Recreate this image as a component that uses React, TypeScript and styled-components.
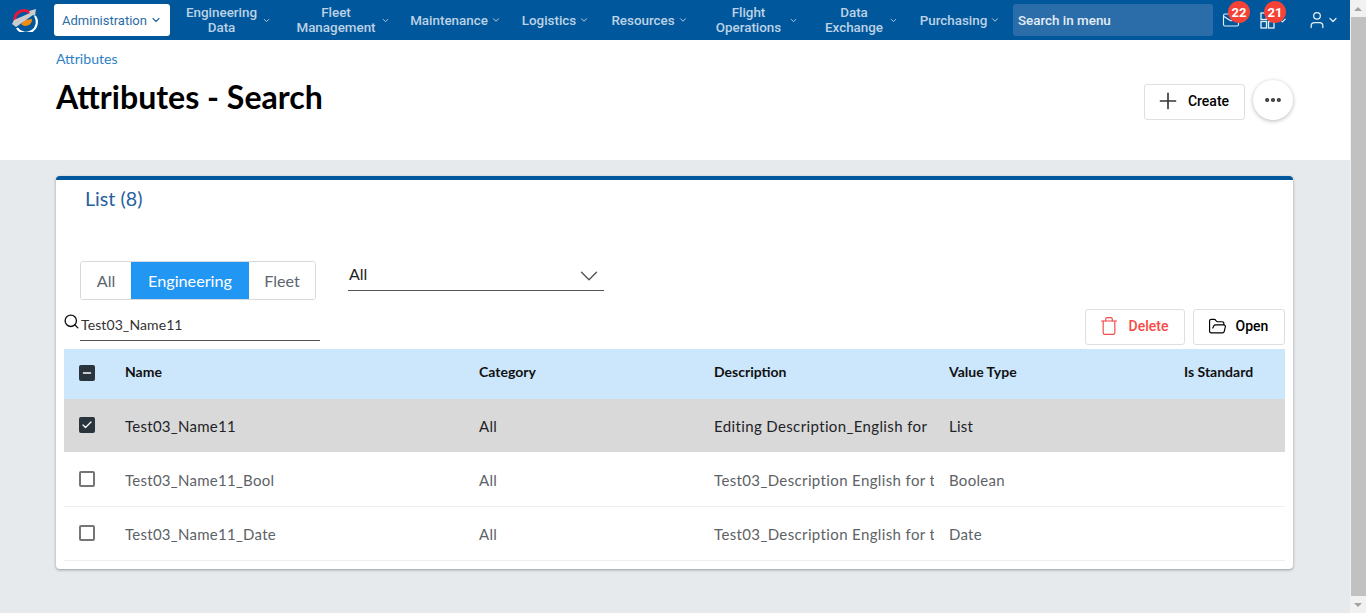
import React from 'react'
import styled, { createGlobalStyle } from 'styled-components'
import { ChevronDown, Plus, Trash, FolderOpen, Mail, User, Check, Minus, Search, MoreHorizontal } from 'lucide-react'

const GlobalStyle = createGlobalStyle`
  html, body { margin: 0; padding: 0; height: 100%; overflow: hidden; }
  body { font-family: Lato, "Liberation Sans", sans-serif; background: #e6eaed; }
  * { box-sizing: border-box; }
`

const S = {
  Shell: styled.div`
    display: flex;
    width: 1366px;
    height: 613px;
    overflow: hidden;
  `,
  Main: styled.div`
    width: 1350px;
    flex: none;
    display: flex;
    flex-direction: column;
  `,
  Scrollbar: styled.div`
    width: 16px;
    flex: none;
    background: #f1f1f1;
    display: flex;
    flex-direction: column;
    align-items: center;
    justify-content: space-between;
  `,
  ScrollArrow: styled.div<{ down?: boolean }>`
    height: 17px;
    width: 16px;
    flex: none;
    display: flex;
    align-items: center;
    justify-content: center;
    &::before {
      content: '';
      border-left: 4px solid transparent;
      border-right: 4px solid transparent;
      ${({ down }) => (down ? 'border-top: 4px solid #a3a3a3;' : 'border-bottom: 4px solid #a3a3a3;')}
    }
  `,
  ScrollThumb: styled.div`
    flex: 1;
    width: 15px;
    margin-left: 1px;
    background: #c1c1c1;
  `,
  Nav: styled.nav`
    height: 40px;
    flex: none;
    background: #01579b;
    display: flex;
    align-items: center;
    font-family: Roboto, "Liberation Sans", sans-serif;
    font-size: 13.4px;
    font-weight: 500;
    color: #bcd2e6;
  `,
  LogoSlot: styled.div`
    width: 54px;
    height: 40px;
    flex: none;
    display: flex;
    align-items: center;
    padding-left: 11px;
  `,
  ActiveItem: styled.div`
    width: 116px;
    height: 32px;
    flex: none;
    background: #fff;
    color: #2a6ca6;
    font-weight: 400;
    font-size: 13px;
    border-radius: 3px;
    display: flex;
    align-items: center;
    justify-content: center;
    gap: 3px;
  `,
  Item: styled.div<{ w: number; gap?: number }>`
    width: ${({ w }) => w}px;
    flex: none;
    display: flex;
    align-items: center;
    justify-content: center;
    gap: ${({ gap }) => gap ?? 3}px;
    text-align: center;
    line-height: 15px;
  `,
  MenuSearch: styled.div`
    width: 200px;
    height: 32px;
    flex: none;
    margin-left: 2px;
    background: #2b6da9;
    border-radius: 3px;
    color: #e3edf6;
    display: flex;
    align-items: center;
    padding-left: 5px;
  `,
  IconSlot: styled.div<{ w: number }>`
    position: relative;
    width: ${({ w }) => w}px;
    height: 40px;
    flex: none;
    display: flex;
    align-items: center;
    color: #e8f0f7;
  `,
  MailIcon: styled.span`
    margin-left: 9px;
    display: flex;
  `,
  AppsSlot: styled.span`
    margin-left: 5px;
    display: flex;
    align-items: center;
    gap: 2px;
  `,
  UserIcon: styled.span`
    margin-left: 2px;
    display: flex;
    align-items: center;
  `,
  Badge: styled.span<{ left: number }>`
    position: absolute;
    top: 1px;
    left: ${({ left }) => left}px;
    width: 22px;
    height: 22px;
    border-radius: 50%;
    background: #f44336;
    color: #fff;
    font-size: 13px;
    font-weight: 700;
    display: flex;
    align-items: center;
    justify-content: center;
  `,
  Header: styled.header`
    height: 120px;
    flex: none;
    background: #fff;
    padding: 10px 57px 0 56px;
    display: flex;
    justify-content: space-between;
  `,
  Crumb: styled.div`
    font-size: 14.1px;
    line-height: 17px;
    color: #2d7fc7;
  `,
  Title: styled.h1`
    margin: 10px 0 0;
    font-size: 32.1px;
    line-height: 40px;
    font-weight: 700;
    color: #000;
  `,
  HeaderActions: styled.div`
    display: flex;
    gap: 8px;
    padding-top: 34px;
    align-items: flex-start;
  `,
  Button: styled.button<{ danger?: boolean; w: number; gap: number; pr?: number }>`
    width: ${({ w }) => w}px;
    height: 36px;
    padding: 0 ${({ pr }) => pr ?? 0}px 2px 0;
    background: #fff;
    border: 1px solid #dfdfdf;
    border-radius: 3px;
    color: ${({ danger }) => (danger ? '#f44a4a' : '#000')};
    font-family: Roboto, "Liberation Sans", sans-serif;
    font-size: 14px;
    font-weight: 500;
    display: flex;
    align-items: center;
    justify-content: center;
    gap: ${({ gap }) => gap}px;
  `,
  RoundButton: styled.button`
    width: 40px;
    height: 40px;
    margin-top: -4px;
    padding: 0;
    border: 0;
    border-radius: 50%;
    background: #fff;
    color: #333;
    box-shadow: 0 1px 4px rgba(0, 0, 0, 0.28);
    display: flex;
    align-items: center;
    justify-content: center;
  `,
  Content: styled.main`
    padding: 16px 57px 0 56px;
  `,
  Card: styled.section`
    height: 393px;
    background: #fff;
    border-top: 4px solid #01579b;
    border-radius: 4px;
    box-shadow: 0 1px 3px rgba(0, 0, 0, 0.35);
    padding: 0 8px;
  `,
  CardTitle: styled.h2`
    margin: 0;
    padding: 7px 0 0 21px;
    height: 81px;
    font-size: 19.7px;
    line-height: 24px;
    font-weight: 400;
    color: #27609e;
  `,
  FilterRow: styled.div`
    display: flex;
    align-items: flex-start;
    padding-left: 16px;
    height: 48px;
  `,
  Segments: styled.div`
    display: flex;
    height: 39px;
    border: 1px solid #d6dadf;
    border-radius: 3px;
    overflow: hidden;
  `,
  Segment: styled.div<{ active?: boolean; w: number }>`
    width: ${({ w }) => w}px;
    background: ${({ active }) => (active ? '#2196f3' : '#fff')};
    color: ${({ active }) => (active ? '#fff' : '#5c6670')};
    font-size: 16.2px;
    display: flex;
    align-items: center;
    justify-content: center;
  `,
  Select: styled.div`
    width: 256px;
    height: 30px;
    margin-left: 32px;
    border-bottom: 1px solid #555;
    font-size: 16px;
    color: #222;
    display: flex;
    align-items: flex-start;
    justify-content: space-between;
    padding: 3px 0 0 1px;
    line-height: 20px;
  `,
  SelectArrow: styled.span`
    display: flex;
    margin-top: -3px;
    color: #555;
  `,
  ToolRow: styled.div`
    height: 40px;
    display: flex;
    justify-content: space-between;
    align-items: flex-start;
  `,
  SearchField: styled.div`
    position: relative;
    width: 240px;
    height: 32px;
    margin-left: 16px;
    padding-left: 1px;
    border-bottom: 1px solid #555;
    font-size: 14px;
    color: #333;
    line-height: 32px;
    letter-spacing: 0.1px;
  `,
  SearchIcon: styled.span`
    position: absolute;
    left: -17px;
    top: 4px;
    color: #111;
    display: flex;
  `,
  Tools: styled.div`
    display: flex;
    gap: 8px;
  `,
  TableHead: styled.div`
    display: grid;
    grid-template-columns: 61px 354px 235px 235px 235px 101px;
    height: 50px;
    align-items: center;
    background: #cce6fc;
    color: #111;
    font-size: 14px;
    font-weight: 700;
    padding-bottom: 5px;
  `,
  Row: styled.div<{ selected?: boolean }>`
    display: grid;
    grid-template-columns: 61px 354px 235px 235px 235px 101px;
    height: 54px;
    align-items: center;
    background: ${({ selected }) => (selected ? '#d9d9d9' : '#fff')};
    border-bottom: 1px solid ${({ selected }) => (selected ? '#fff' : '#eeeeee')};
    color: ${({ selected }) => (selected ? '#1e2327' : '#5d6266')};
    font-size: 15px;
    letter-spacing: 0.27px;
  `,
  Cell: styled.div<{ wide?: boolean }>`
    overflow: hidden;
    white-space: nowrap;
    margin-right: 15px;
    ${({ wide }) => wide && 'letter-spacing: 0.37px;'}
  `,
  CheckCell: styled.div<{ nudge: number }>`
    padding-left: 15px;
    margin-top: ${({ nudge }) => nudge}px;
    display: flex;
  `,
  Box: styled.span<{ on?: boolean }>`
    width: 16px;
    height: 16px;
    border-radius: 2px;
    background: ${({ on }) => (on ? '#29343d' : '#fff')};
    border: ${({ on }) => (on ? '0' : '2px solid #757575')};
    color: #fff;
    display: flex;
    align-items: center;
    justify-content: center;
  `,
}

const Logo = () => (
  <svg width="28" height="24" viewBox="0 0 28 24">
    <path d="M4 13 A9 9 0 0 1 19 5" fill="none" stroke="#e3173e" strokeWidth="3" />
    <path d="M6 20 A10 10 0 0 0 24 8" fill="none" stroke="#fff" strokeWidth="2.2" />
    <path d="M10 16 A6.5 6.5 0 0 0 21 11 L14 12 Z" fill="#f28c0f" />
    <path d="M1 16 L3 12 L19 5 L18 3 L25 1 L24 8 L22 7 L5 19 Z" fill="#c9ccce" />
  </svg>
)

const AppsIcon = () => (
  <svg width="15" height="18" viewBox="0 0 15 18" fill="none" stroke="currentColor" strokeWidth="1.3">
    <rect x="1" y="2" width="5.5" height="6.5" />
    <rect x="1" y="10.5" width="5.5" height="6.5" />
    <rect x="8.5" y="10.5" width="5.5" height="6.5" />
  </svg>
)

const Chevron = ({ size = 12 }: { size?: number }) => <ChevronDown size={size} strokeWidth={2.4} />

const rows = [
  { name: 'Test03_Name11', description: 'Editing Description_English for', type: 'List', selected: true },
  { name: 'Test03_Name11_Bool', description: 'Test03_Description English for t', type: 'Boolean' },
  { name: 'Test03_Name11_Date', description: 'Test03_Description English for t', type: 'Date' },
]

export default function App() {
  return (
    <>
      <GlobalStyle />
      <S.Shell>
        <S.Main>
          <S.Nav>
            <S.LogoSlot>
              <Logo />
            </S.LogoSlot>
            <S.ActiveItem>
              Administration <Chevron />
            </S.ActiveItem>
            <S.Item w={117} gap={5}>
              <span>Engineering<br />Data</span> <Chevron size={9} />
            </S.Item>
            <S.Item w={112} gap={5}>
              <span>Fleet<br />Management</span> <Chevron size={9} />
            </S.Item>
            <S.Item w={113}>Maintenance <Chevron size={10} /></S.Item>
            <S.Item w={87}>Logistics <Chevron size={10} /></S.Item>
            <S.Item w={101}>Resources <Chevron size={10} /></S.Item>
            <S.Item w={114} gap={8}>
              <span>Flight<br />Operations</span> <Chevron size={9} />
            </S.Item>
            <S.Item w={95} gap={6}>
              <span>Data<br />Exchange</span> <Chevron size={9} />
            </S.Item>
            <S.Item w={102}>Purchasing <Chevron size={10} /></S.Item>
            <S.MenuSearch>Search in menu</S.MenuSearch>
            <S.IconSlot w={42}>
              <S.MailIcon><Mail size={18} strokeWidth={1.5} /></S.MailIcon>
              <S.Badge left={15}>22</S.Badge>
            </S.IconSlot>
            <S.IconSlot w={50}>
              <S.AppsSlot><AppsIcon /><Chevron size={11} /></S.AppsSlot>
              <S.Badge left={9}>21</S.Badge>
            </S.IconSlot>
            <S.IconSlot w={45}>
              <S.UserIcon><User size={20} strokeWidth={1.5} /><Chevron /></S.UserIcon>
            </S.IconSlot>
          </S.Nav>
          <S.Header>
            <div>
              <S.Crumb>Attributes</S.Crumb>
              <S.Title>Attributes - Search</S.Title>
            </div>
            <S.HeaderActions>
              <S.Button w={101} gap={7} pr={5}>
                <Plus size={26} strokeWidth={1.5} color="#333" /> Create
              </S.Button>
              <S.RoundButton aria-label="More">
                <MoreHorizontal size={20} strokeWidth={3} />
              </S.RoundButton>
            </S.HeaderActions>
          </S.Header>
          <S.Content>
            <S.Card>
              <S.CardTitle>List (8)</S.CardTitle>
              <S.FilterRow>
                <S.Segments>
                  <S.Segment w={50}>All</S.Segment>
                  <S.Segment active w={118}>Engineering</S.Segment>
                  <S.Segment w={66}>Fleet</S.Segment>
                </S.Segments>
                <S.Select>
                  All <S.SelectArrow><ChevronDown size={30} strokeWidth={1.1} /></S.SelectArrow>
                </S.Select>
              </S.FilterRow>
              <S.ToolRow>
                <S.SearchField>
                  <S.SearchIcon><Search size={17} strokeWidth={1.9} /></S.SearchIcon>
                  Test03_Name11
                </S.SearchField>
                <S.Tools>
                  <S.Button danger w={100} gap={10} pr={3}>
                    <Trash size={20} strokeWidth={1.4} /> Delete
                  </S.Button>
                  <S.Button w={92} gap={9} pr={2}>
                    <FolderOpen size={19} strokeWidth={1.5} /> Open
                  </S.Button>
                </S.Tools>
              </S.ToolRow>
              <S.TableHead>
                <S.CheckCell nudge={3}>
                  <S.Box on><Minus size={12} strokeWidth={3} /></S.Box>
                </S.CheckCell>
                <S.Cell>Name</S.Cell>
                <S.Cell>Category</S.Cell>
                <S.Cell>Description</S.Cell>
                <S.Cell>Value Type</S.Cell>
                <S.Cell>Is Standard</S.Cell>
              </S.TableHead>
              {rows.map((row) => (
                <S.Row key={row.name} selected={row.selected}>
                  <S.CheckCell nudge={-2}>
                    <S.Box on={row.selected}>{row.selected && <Check size={12} strokeWidth={2.5} />}</S.Box>
                  </S.CheckCell>
                  <S.Cell>{row.name}</S.Cell>
                  <S.Cell>All</S.Cell>
                  <S.Cell wide>{row.description}</S.Cell>
                  <S.Cell>{row.type}</S.Cell>
                  <S.Cell />
                </S.Row>
              ))}
            </S.Card>
          </S.Content>
        </S.Main>
        <S.Scrollbar>
          <S.ScrollArrow />
          <S.ScrollThumb />
          <S.ScrollArrow down />
        </S.Scrollbar>
      </S.Shell>
    </>
  )
}
